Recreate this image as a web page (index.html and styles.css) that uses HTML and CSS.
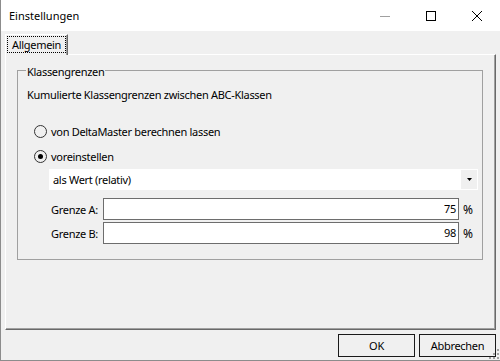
FILE: index.html
```html
<!DOCTYPE html>
<html lang="de">
  <head>
    <meta charset="UTF-8" />
    <title>Einstellungen</title>
    <link rel="stylesheet" href="styles.css">
  </head>
  <body>
    <div class="window">
      <div class="titlebar">
        <span class="title">Einstellungen</span>
        <div class="caption">
          <span class="cap">
            <svg width="10" height="10" viewBox="0 0 10 10"><path d="M0 5.5h10" stroke="#a0a0a0" /></svg>
          </span>
          <span class="cap">
            <svg width="10" height="10" viewBox="0 0 10 10"><rect x="0.5" y="0.5" width="9" height="9" fill="none" stroke="#000" /></svg>
          </span>
          <span class="cap">
            <svg width="10" height="10" viewBox="0 0 10 10"><path d="M0 0L10 10M10 0L0 10" stroke="#000" /></svg>
          </span>
        </div>
      </div>

      <div class="client">
        <!-- Tabs -->
        <div class="tabs">
          <div class="tab"><span class="focus">Allgemein</span></div>
        </div>

        <div class="panel">
          <fieldset class="group">
            <legend>Klassengrenzen</legend>
            <p class="desc">Kumulierte Klassengrenzen zwischen ABC-Klassen</p>

            <label class="radio first"><span class="circle"></span>von DeltaMaster berechnen lassen</label>
            <label class="radio checked"><span class="circle"></span>voreinstellen</label>

            <div class="combo">
              <span class="combo-text">als Wert (relativ)</span>
              <span class="drop">
                <svg width="5" height="3" viewBox="0 0 5 3"><path d="M0 0h5L2.5 3z" fill="#000" /></svg>
              </span>
            </div>

            <div class="field first">
              <span class="field-label">Grenze A:</span>
              <span class="input">75</span>
              <span class="unit">%</span>
            </div>
            <div class="field">
              <span class="field-label">Grenze B:</span>
              <span class="input">98</span>
              <span class="unit">%</span>
            </div>
          </fieldset>
        </div>

        <!-- Dialog buttons -->
        <div class="buttons">
          <button class="btn">OK</button>
          <button class="btn">Abbrechen</button>
        </div>
      </div>

      <svg class="grip" width="12" height="12" viewBox="0 0 12 12">
        <rect x="9" y="1" width="2" height="2" fill="#a0a0a0" />
        <rect x="5" y="5" width="2" height="2" fill="#a0a0a0" />
        <rect x="9" y="5" width="2" height="2" fill="#a0a0a0" />
        <rect x="1" y="9" width="2" height="2" fill="#a0a0a0" />
        <rect x="5" y="9" width="2" height="2" fill="#a0a0a0" />
        <rect x="9" y="9" width="2" height="2" fill="#a0a0a0" />
      </svg>
    </div>
  </body>
</html>
```

FILE: styles.css
```css
* {
  box-sizing: border-box;
}
body {
  margin: 0;
  font-family: "Noto Sans", sans-serif;
  font-size: 11px;
  letter-spacing: -0.3px;
  color: #000;
  background: #fff;
}
.window {
  position: relative;
  width: 500px;
  height: 361px;
  border-left: 1px solid #8c8c8c;
  border-bottom: 1px solid #8c8c8c;
  display: flex;
  flex-direction: column;
}
.titlebar {
  height: 31px;
  background: #fff;
  display: flex;
  align-items: center;
}
.title {
  flex: 1;
  padding-left: 8px;
  letter-spacing: 0;
}
.caption {
  display: flex;
  align-self: stretch;
}
.cap {
  width: 46px;
  display: flex;
  align-items: center;
  justify-content: center;
}
.client {
  flex: 1;
  background: #f0f0f0;
  padding: 3px 4px 3px 3px;
  display: flex;
  flex-direction: column;
}
.tabs {
  display: flex;
  padding-left: 1px;
}
.tab {
  position: relative;
  z-index: 1;
  height: 21px;
  margin-bottom: -1px;
  padding: 1px 1px 0 1px;
  background: #f0f0f0;
  border-top: 1px solid #fff;
  border-left: 1px solid #fff;
  border-right: 1px solid #696969;
  box-shadow: inset -1px 0 0 #a0a0a0;
}
.focus {
  display: block;
  line-height: 15px;
  padding: 0 4px;
  border: 1px dotted #000;
}
.panel {
  height: 276px;
  margin-left: 1px;
  border-top: 1px solid #fff;
  border-left: 1px solid #fff;
  border-right: 1px solid #696969;
  border-bottom: 1px solid #696969;
  box-shadow: inset -1px -1px 0 #a0a0a0;
}
.group {
  margin: 6px 12px 0 11px;
  padding: 0 4px 15px 9px;
  border: 1px solid #a0a0a0;
}
.group legend {
  margin-left: -1px;
  padding: 4px 1px 0 1px;
  line-height: 14px;
}
.desc {
  margin: 8px 0 0 0;
  line-height: 16px;
}
.radio {
  display: flex;
  align-items: center;
  height: 16px;
  margin: 9px 0 0 7px;
}
.radio.first {
  margin-top: 20px;
}
.circle {
  width: 13px;
  height: 13px;
  margin-right: 4px;
  border: 1px solid #333;
  border-radius: 50%;
  display: flex;
  align-items: center;
  justify-content: center;
}
.radio.checked .circle::after {
  content: "";
  width: 5px;
  height: 5px;
  border-radius: 50%;
  background: #000;
}
.combo {
  display: flex;
  align-items: center;
  height: 21px;
  margin: 5px 0 0 22px;
  padding-left: 4px;
  background: #fff;
}
.combo-text {
  flex: 1;
}
.drop {
  align-self: stretch;
  width: 16px;
  margin: 1px;
  background: #f0f0f0;
  display: flex;
  align-items: center;
  justify-content: center;
}
.field {
  display: flex;
  align-items: center;
  height: 22px;
  margin: 2px 0 0 24px;
}
.field.first {
  margin-top: 8px;
}
.field-label {
  width: 52px;
}
.input {
  width: 356px;
  height: 22px;
  line-height: 20px;
  padding-right: 2px;
  text-align: right;
  background: #fff;
  border: 1px solid #6d6d6d;
}
.unit {
  margin-left: 4px;
  font-size: 12px;
}
.buttons {
  margin-top: 4px;
  display: flex;
  justify-content: flex-end;
  gap: 4px;
}
.btn {
  width: 77px;
  height: 23px;
  padding: 0;
  font-family: inherit;
  font-size: 11px;
  letter-spacing: -0.3px;
  color: #000;
  background: #f0f0f0;
  border: 1px solid #1a1a1a;
}
.grip {
  position: absolute;
  right: 0;
  bottom: 0;
}
```
